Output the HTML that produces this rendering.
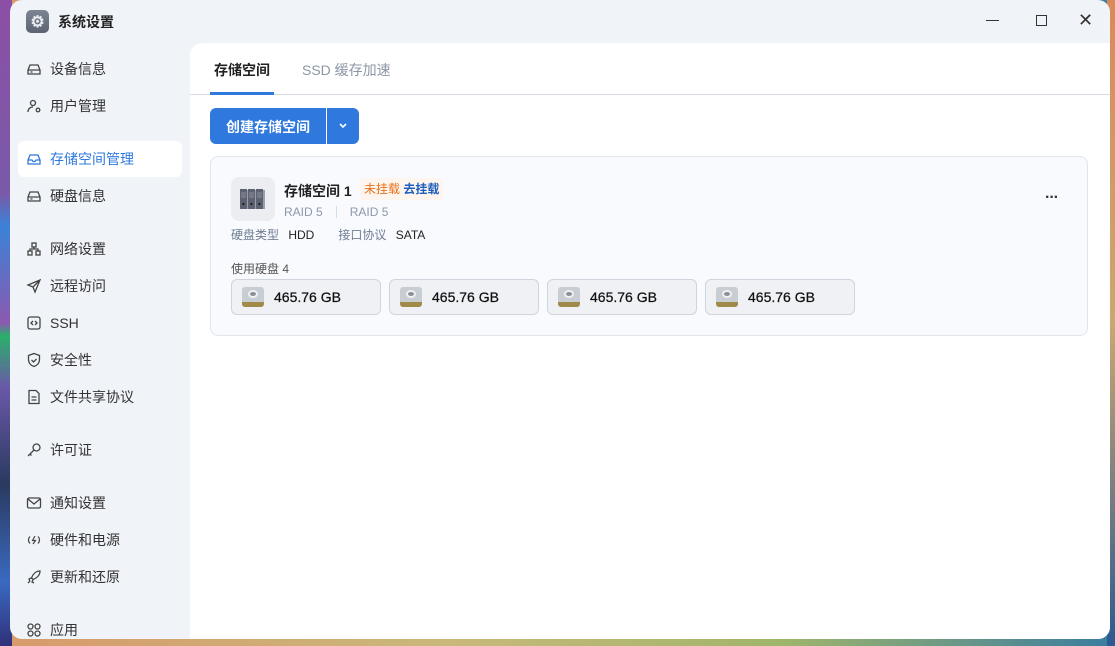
<!DOCTYPE html>
<html><head><meta charset="utf-8"><style>
*{margin:0;padding:0;box-sizing:border-box}
body{width:1115px;height:646px;overflow:hidden;position:relative;font-family:"Liberation Sans","Noto Sans CJK SC",sans-serif;background:linear-gradient(90deg,#d89a6a,#c9b87a 40%,#9fb66a 70%,#3a7ca0)}
.lstrip{position:absolute;left:0;top:0;width:12px;height:646px;background:linear-gradient(180deg,#8b4fa6 0%,#7a5aa8 30%,#3b82d6 35%,#8a5ab0 50%,#2ab06a 52%,#6a58a8 60%,#2a3a60 75%,#3a6ac0 90%,#30307a)}
.rstrip{position:absolute;right:0;top:0;width:8px;height:646px;background:linear-gradient(180deg,#d98a5a,#c9a870 50%,#2a5a90)}
.win{position:absolute;left:10px;top:0;width:1100px;height:639px;background:#f0f3f8;border-radius:12px;overflow:hidden}
.title{position:absolute;left:16px;top:10px;display:flex;align-items:center;font-size:14px;font-weight:bold;color:#222}
.logo{width:23px;height:23px;border-radius:5px;background:linear-gradient(#7d8594,#5c6472);margin-right:9px;display:flex;align-items:center;justify-content:center;color:#e8ebef;font-size:16px}
.ctl{position:absolute;top:12px;font-size:14px;color:#333}
.nav{position:absolute;left:8px;width:164px;height:36px;display:flex;align-items:center;font-size:14px;color:#333}
.nav svg{margin:0 8px 0 8px;width:16px;height:16px}
.nav.act{background:#fff;border-radius:6px;color:#2f78dd}
.main{position:absolute;left:180px;top:43px;width:920px;height:596px;background:#fff;border-top-left-radius:12px}
.tabs{position:absolute;left:0;top:0;width:920px;height:52px;border-bottom:1px solid #d6dbe3}
.tab{position:absolute;top:17px;font-size:14px}
.btn{position:absolute;left:20px;top:65px;height:36px;width:149px;background:#2f78dd;border-radius:6px;color:#fff;font-size:14px;font-weight:bold}
.card{position:absolute;left:20px;top:113px;width:878px;height:180px;background:#f8fafd;border:1px solid #e1e6ee;border-radius:8px}
.disk{position:absolute;top:122px;width:150px;height:36px;background:#eff1f5;border:1px solid #cfd5de;border-radius:6px;display:flex;align-items:center;font-size:14px;color:#111;-webkit-text-stroke:0.25px #111}
.disk i{display:block;width:22px;height:20px;margin:0 10px 0 10px;border-radius:3px;background:linear-gradient(#c8ccd3 75%,#a08a4a 75%);position:relative}
.disk i:after{content:"";position:absolute;left:6px;top:3px;width:10px;height:8px;border-radius:50%;background:#8a9099;border:2px solid #eef0f3;box-sizing:border-box}
</style></head><body>
<div class="lstrip"></div><div class="rstrip"></div>
<div class="win">
<div class="title"><div class="logo">⚙</div>系统设置</div>
<div class="ctl" style="left:976px;top:20px;width:13px;border-top:1.5px solid #333"></div>
<div class="ctl" style="left:1026px;top:15px;width:11px;height:11px;border:1.5px solid #333"></div>
<div class="ctl" style="left:1068px;top:10px;font-size:18px">✕</div>

<div class="nav" style="top:51px"><svg viewBox="0 0 16 16" fill="none" stroke="#444" stroke-width="1.3"><path d="M2 9l2-5h8l2 5v4H2zM2 9h12M4.5 11h2"/></svg>设备信息</div>
<div class="nav" style="top:88px"><svg viewBox="0 0 16 16" fill="none" stroke="#444" stroke-width="1.3"><circle cx="7" cy="5" r="2.5"/><path d="M2 14c0-3 2-5 5-5"/><circle cx="12" cy="12" r="1.8"/></svg>用户管理</div>
<div class="nav act" style="top:141px"><svg viewBox="0 0 16 16" fill="none" stroke="#2f78dd" stroke-width="1.3"><path d="M2 9l2-5h8l2 5v4H2zM2 9h4l1 1.5h2l1-1.5h4"/></svg>存储空间管理</div>
<div class="nav" style="top:178px"><svg viewBox="0 0 16 16" fill="none" stroke="#444" stroke-width="1.3"><path d="M2 9l2-5h8l2 5v4H2zM2 9h12M4.5 11h2"/></svg>硬盘信息</div>
<div class="nav" style="top:231px"><svg viewBox="0 0 16 16" fill="none" stroke="#444" stroke-width="1.3"><rect x="6" y="2" width="4" height="4"/><rect x="2" y="10" width="4" height="4"/><rect x="10" y="10" width="4" height="4"/><path d="M8 6v2M4 10V8h8v2"/></svg>网络设置</div>
<div class="nav" style="top:268px"><svg viewBox="0 0 16 16" fill="none" stroke="#444" stroke-width="1.3"><path d="M14 2L2 7l5 2 2 5zM7 9l7-7"/></svg>远程访问</div>
<div class="nav" style="top:305px"><svg viewBox="0 0 16 16" fill="none" stroke="#444" stroke-width="1.3"><rect x="2" y="2" width="12" height="12" rx="2"/><path d="M7 6L5 8l2 2M9 6l2 2-2 2"/></svg>SSH</div>
<div class="nav" style="top:342px"><svg viewBox="0 0 16 16" fill="none" stroke="#444" stroke-width="1.3"><path d="M8 1.5l5.5 2v4c0 3.5-2.5 6-5.5 7-3-1-5.5-3.5-5.5-7v-4zM5.5 8l2 2 3-3"/></svg>安全性</div>
<div class="nav" style="top:379px"><svg viewBox="0 0 16 16" fill="none" stroke="#444" stroke-width="1.3"><path d="M3 1.5h7l3 3v10H3zM5.5 8h5M5.5 11h5"/></svg>文件共享协议</div>
<div class="nav" style="top:432px"><svg viewBox="0 0 16 16" fill="none" stroke="#444" stroke-width="1.3"><circle cx="10.5" cy="5.5" r="3.5"/><path d="M8 8l-6 6M4 12l1.5 1.5"/></svg>许可证</div>
<div class="nav" style="top:485px"><svg viewBox="0 0 16 16" fill="none" stroke="#444" stroke-width="1.3"><rect x="1.5" y="3" width="13" height="10" rx="1.5"/><path d="M2 4l6 5 6-5"/></svg>通知设置</div>
<div class="nav" style="top:522px"><svg viewBox="0 0 16 16" fill="none" stroke="#444" stroke-width="1.2"><path d="M4 4.5c-2 2-2 5 0 7M12 4.5c2 2 2 5 0 7M9 4L6.5 8.5h3L7 12"/></svg>硬件和电源</div>
<div class="nav" style="top:559px"><svg viewBox="0 0 16 16" fill="none" stroke="#444" stroke-width="1.3"><path d="M14 2c-4 0-7 3-8.5 7l1.5 1.5C11 9 14 6 14 2zM5 9l-2 1 1 2M7 11l-1 2 2 1M2 14l2-2"/></svg>更新和还原</div>
<div class="nav" style="top:612px"><svg viewBox="0 0 16 16" fill="none" stroke="#444" stroke-width="1.3"><circle cx="4.5" cy="4.5" r="2.5"/><circle cx="11.5" cy="4.5" r="2.5"/><circle cx="4.5" cy="11.5" r="2.5"/><circle cx="11.5" cy="11.5" r="2.5"/></svg>应用</div>

<div class="main">
<div class="tabs">
<div class="tab" style="left:24px;font-weight:bold;color:#222">存储空间</div>
<div style="position:absolute;left:20px;top:49px;width:64px;height:3px;background:#2f78dd"></div>
<div class="tab" style="left:112px;color:#8c96a5">SSD 缓存加速</div>
</div>
<div class="btn"><span style="position:absolute;left:16px;top:9px">创建存储空间</span>
<div style="position:absolute;left:116px;top:0;width:1px;height:36px;background:#fff"></div>
<svg style="position:absolute;left:128px;top:14px" width="10" height="8" viewBox="0 0 10 8" fill="none" stroke="#fff" stroke-width="1.6"><path d="M2 2l3 3 3-3"/></svg></div>
<div class="card">
<div style="position:absolute;left:20px;top:20px;width:44px;height:44px;border-radius:8px;background:#ebedf1">
<svg width="44" height="44" viewBox="0 0 44 44"><g fill="#5d6272"><rect x="9" y="12" width="7" height="20"/><rect x="17" y="12" width="7" height="20"/><rect x="25" y="12" width="7" height="20"/></g><g fill="#9a9fab"><rect x="16" y="13" width="1" height="19"/><rect x="24" y="13" width="1" height="19"/><rect x="32" y="13" width="2" height="19"/></g><g fill="#222"><circle cx="12.5" cy="27" r="1.2"/><circle cx="20.5" cy="27" r="1.2"/><circle cx="28.5" cy="27" r="1.2"/></g><g stroke="#9aa0ad" stroke-width="0.8"><path d="M10 16h5M10 18h5M10 20h5M18 16h5M18 18h5M18 20h5M26 16h5M26 18h5M26 20h5"/></g></svg></div>
<div style="position:absolute;left:73px;top:24px;font-size:14px;font-weight:bold;color:#222">存储空间 1</div>
<div style="position:absolute;left:149px;top:21px;height:22px;padding:0 4px;background:#fdf5ee;border-radius:3px;font-size:12px;line-height:22px"><span style="color:#e8721c">未挂载</span> <span style="color:#1e5fc0;font-weight:bold">去挂载</span></div>
<div style="position:absolute;left:73px;top:48px;font-size:12px;color:#8c99ab">RAID 5<span style="display:inline-block;width:1px;height:12px;background:#d8dde5;margin:0 13px -2px 13px"></span>RAID 5</div>
<div style="position:absolute;left:20px;top:69px;font-size:12px;color:#6e7d92">硬盘类型 <span style="color:#222;margin-left:6px">HDD</span><span style="margin-left:24px">接口协议</span> <span style="color:#222;margin-left:6px">SATA</span></div>
<div style="position:absolute;left:20px;top:103px;font-size:12px;color:#555">使用硬盘 4</div>
<div style="position:absolute;left:834px;top:32px;font-size:16px;font-weight:bold;color:#333;letter-spacing:-1px">···</div>
<div class="disk" style="left:20px"><i></i>465.76 GB</div>
<div class="disk" style="left:178px"><i></i>465.76 GB</div>
<div class="disk" style="left:336px"><i></i>465.76 GB</div>
<div class="disk" style="left:494px"><i></i>465.76 GB</div>
</div>
</div>
</div>
</body></html>
